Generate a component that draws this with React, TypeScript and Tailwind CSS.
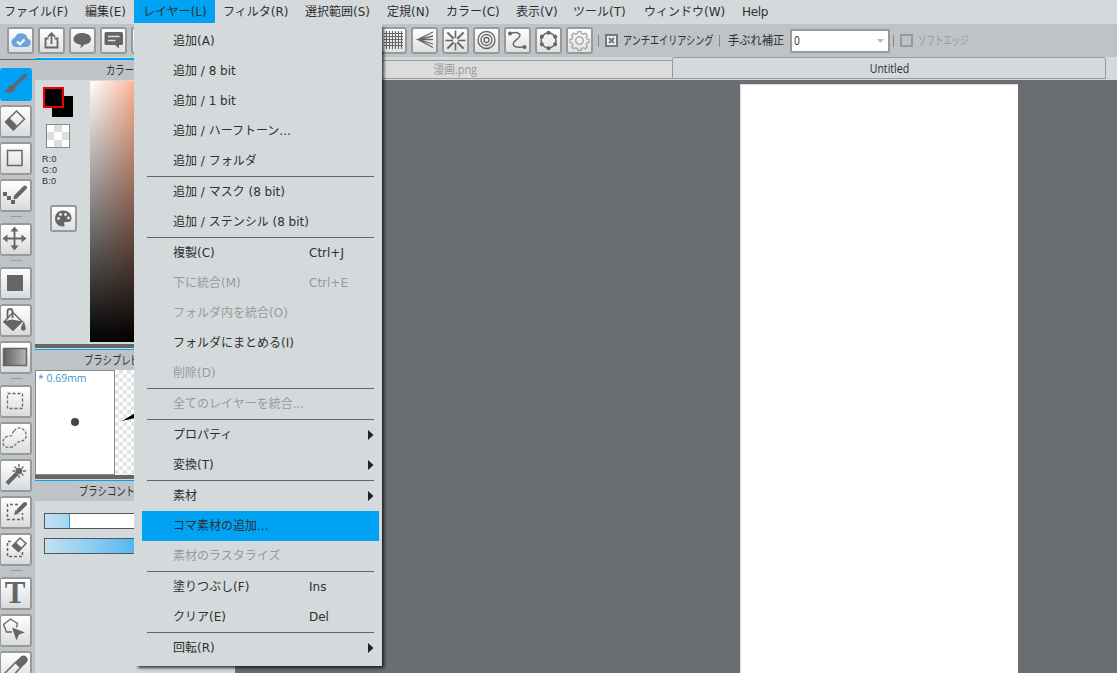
import type { ReactNode } from 'react'
import clsx from 'clsx'

const menus = [
  { label: 'ファイル(F)', cls: 'w-[81px]' },
  { label: '編集(E)', cls: 'w-[49px]' },
  { label: 'レイヤー(L)', cls: 'w-[81px] pl-[9px] bg-[#00a2f4] mr-2' },
  { label: 'フィルタ(R)', cls: 'w-[82px]' },
  { label: '選択範囲(S)', cls: 'w-[82px]' },
  { label: '定規(N)', cls: 'w-[59px]' },
  { label: 'カラー(C)', cls: 'w-[70px]' },
  { label: '表示(V)', cls: 'w-[57px]' },
  { label: 'ツール(T)', cls: 'w-[71px]' },
  { label: 'ウィンドウ(W)', cls: 'w-[98px]' },
  { label: 'Help', cls: 'tracking-[-0.3px]' },
]

type Entry = { label: string; key?: string; off?: boolean; active?: boolean; sub?: boolean }

const layerMenu: Entry[][] = [
  [
    { label: '追加(A)' },
    { label: '追加 / 8 bit' },
    { label: '追加 / 1 bit' },
    { label: '追加 / ハーフトーン...' },
    { label: '追加 / フォルダ' },
  ],
  [{ label: '追加 / マスク (8 bit)' }, { label: '追加 / ステンシル (8 bit)' }],
  [
    { label: '複製(C)', key: 'Ctrl+J' },
    { label: '下に統合(M)', key: 'Ctrl+E', off: true },
    { label: 'フォルダ内を統合(O)', off: true },
    { label: 'フォルダにまとめる(I)' },
    { label: '削除(D)', off: true },
  ],
  [{ label: '全てのレイヤーを統合...', off: true }],
  [{ label: 'プロパティ', sub: true }, { label: '変換(T)', sub: true }],
  [
    { label: '素材', sub: true },
    { label: 'コマ素材の追加...', active: true },
    { label: '素材のラスタライズ', off: true },
  ],
  [{ label: '塗りつぶし(F)', key: 'Ins' }, { label: 'クリア(E)', key: 'Del' }],
  [{ label: '回転(R)', sub: true }],
]

function Icon({ children, size = 27 }: { children?: ReactNode; size?: number }) {
  return (
    <svg width={size} height={size} viewBox={`0 0 ${size} ${size}`} fill="none" stroke="#666" strokeWidth="1.5" className="block">
      {children}
    </svg>
  )
}

function BarButton({ children }: { children?: ReactNode }) {
  return (
    <div className="size-[27px] shrink-0 rounded-[3px] border-2 border-[#999] bg-linear-to-b from-white to-[#dde0e2]">
      <div className="-m-0.5">
        <Icon>{children}</Icon>
      </div>
    </div>
  )
}

const cloud = (
  <>
    <path d="M8.5 19h10.500a3.400 3.400 0 0 0 .6-6.800 5.500 5.500 0 0 0-10.800-.7A3.800 3.800 0 0 0 8.500 19z" fill="#6ea3dc" stroke="#6ea3dc" strokeWidth="2" />
    <path d="M10 14.5l3 2.700 4.500-4.700" stroke="#fff" strokeWidth="2.200" />
  </>
)
const share = (
  <>
    <path d="M10.500 11.500H7.500v9h12v-9h-3" strokeWidth="1.800" />
    <path d="M13.500 17V7M10 9.800l3.500-3.600L17 9.800" strokeWidth="1.800" />
  </>
)
const bubble = (
  <>
    <defs>
      <pattern id="dots" width="2" height="2" patternUnits="userSpaceOnUse">
        <rect width="2" height="2" fill="#777" />
        <rect width="1" height="1" fill="#aaa" />
      </pattern>
    </defs>
    <path d="M13 6c5 0 9 2.300 9 6s-4 5.500-7 5.700c-.8 1.600-2.200 2.800-4 3 .8-1 1-2 .8-3C8 17.300 4.500 15.300 4.500 12S8 6 13 6z" fill="url(#dots)" stroke="none" />
  </>
)
const comment = (
  <>
    <path d="M6 5h15.500q1.500 0 1.500 1.500v10q0 1.500-1.500 1.500H19v3.500L15 18H6q-1.500 0-1.500-1.500v-10Q4.500 5 6 5z" fill="#666" stroke="none" />
    <path d="M8 9.500h11.500M8 13.500h7.500" stroke="#ddd" />
  </>
)

const rays = [0, 45, 90, 135, 180, 225, 270, 315]

const rulers = [
  <path key="grid" d="M6.500 4v18M9.500 4v18M12.500 4v18M15.500 4v18M18.500 4v18M21.500 4v18M4 6.500h19M4 9.500h19M4 12.500h19M4 15.500h19M4 18.500h19" strokeWidth="1.100" />,
  <path key="vanish" d="M22 5L7 12.500 22 20.500M22 9L7 12.500 22 17M22 12.500H7" strokeWidth="1.300" />,
  <g key="radial">
    {rays.map(a => (
      <path
        key={a}
        d={a % 90 ? 'M13.500 11v-9' : 'M13.500 11v-7.500'}
        strokeWidth={a % 90 ? 2 : 1.6}
        transform={`rotate(${a} 13.500 13.500)`}
      />
    ))}
  </g>,
  <g key="circle" strokeWidth="1.300">
    <circle cx="13.500" cy="13" r="8.500" />
    <circle cx="13.500" cy="13" r="5.500" />
    <circle cx="13.500" cy="13" r="2.500" />
  </g>,
  <g key="curve">
    <path d="M6.500 6.500C12 4.500 17.500 6 15.500 9.500S8 14.500 9.500 18s6 2 11 2" />
    <circle cx="6" cy="6.500" r="2" fill="#666" stroke="none" />
    <circle cx="20.500" cy="20" r="2" fill="#666" stroke="none" />
  </g>,
  <g key="ellipse">
    <circle cx="13.500" cy="13.500" r="7.500" />
    {[0, 60, 120, 180, 240, 300].map(a => (
      <circle key={a} cx="13.500" cy="5.800" r="2" fill="#666" stroke="none" transform={`rotate(${a} 13.500 13.500)`} />
    ))}
  </g>,
  <g key="gear" stroke="#aaa">
    <circle cx="13.500" cy="13.500" r="3.800" />
    <path
      d="M12 4.500h3l.5 2 1.800.8 1.900-1.100 2.100 2.100-1.100 1.900.8 1.800 2 .5v3l-2 .5-.8 1.800 1.100 1.900-2.100 2.100-1.900-1.100-1.800.8-.5 2h-3l-.5-2-1.800-.8-1.900 1.100-2.100-2.100 1.100-1.900-.8-1.800-2-.5v-3l2-.5.8-1.800-1.100-1.900 2.100-2.100 1.900 1.100 1.800-.8z"
      strokeWidth="1.400"
    />
  </g>,
]

const tools: ({ id: string; icon: ReactNode } | null)[] = [
  {
    id: 'brush',
    icon: (
      <>
        <path d="M25.500 7L14.500 17.500" strokeWidth="3.500" strokeLinecap="round" />
        <path d="M13.500 17.500c2.500 1.500 2 4.500 0 6-2.500 1.800-6.500 1.700-9.500-.5 3 0 3-1.500 4-3.500s3.500-3 5.500-2z" fill="#666" stroke="none" />
      </>
    ),
  },
  {
    id: 'eraser',
    icon: (
      <>
        <path d="M5.500 17L16.500 6l8 8-11 11z" />
        <path d="M5 17l4-4.500 8 8-4 5z" fill="#666" stroke="none" />
      </>
    ),
  },
  { id: 'shape', icon: <rect x="7.500" y="8.500" width="14.500" height="15" /> },
  {
    id: 'dot',
    icon: (
      <>
        <path d="M25 8.500L16.500 17" strokeWidth="4" strokeLinecap="round" />
        <path d="M14 16l3.500 3.500-4 1z" fill="#666" stroke="none" />
        <path d="M3 13h4v4H3zM7 17h4v4H7zM11 21h4v4h-4z" fill="#666" stroke="none" />
      </>
    ),
  },
  null,
  {
    id: 'move',
    icon: (
      <>
        <path d="M14.500 6v19M5 15.500h19" strokeWidth="1.900" />
        <path d="M14.500 3.500l4 5h-8zM14.500 27.500l4-5h-8zM2.500 15.500l5-4v8zM26.500 15.500l-5-4v8z" fill="#666" stroke="none" />
      </>
    ),
  },
  null,
  { id: 'fillrect', icon: <rect x="7" y="8" width="16" height="16" fill="#666" stroke="none" /> },
  {
    id: 'bucket',
    icon: (
      <>
        <path d="M4 18L13 8.500l9 9L13 26z" />
        <path d="M7.500 14V7.500Q7.500 5 10 5t2.500 2.500V14" strokeWidth="1.800" />
        <path d="M3 17.500l9-2 10.500 2L13 27z" fill="#666" stroke="none" />
        <path d="M24 16.500c0 3 2.500 7 1.500 9s-5 1.500-4.500-1.500 2-4 3-7.500z" fill="#666" stroke="none" />
      </>
    ),
  },
  {
    id: 'gradient',
    icon: (
      <>
        <defs>
          <linearGradient id="grad">
            <stop stopColor="#606060" />
            <stop offset="1" stopColor="#b8b8b8" />
          </linearGradient>
        </defs>
        <rect x="3.500" y="7.500" width="23" height="17" fill="url(#grad)" />
      </>
    ),
  },
  null,
  { id: 'select', icon: <rect x="7.500" y="8.500" width="15" height="15" strokeDasharray="3 2" strokeWidth="1.300" /> },
  {
    id: 'lasso',
    icon: (
      <path
        d="M14 9C17 5 21 5 24 8s3 8 0 10-6 1-8 4-6 4-10 3-4-8 0-10 5 0 6-2 0-2 2-4z"
        strokeDasharray="3 1.500"
        strokeWidth="1.200"
      />
    ),
  },
  {
    id: 'wand',
    icon: (
      <>
        <path d="M7 24.500l10-10" strokeWidth="4" />
        <circle cx="19" cy="12" r="3.300" fill="#666" stroke="none" />
        <path d="M19 5v3M19 16v3M12.500 12h3M23 12h3M14.500 7.500l2 2M23.500 7.500l-2 2M23.500 16.500l-2-2" strokeWidth="1.300" />
      </>
    ),
  },
  {
    id: 'selpen',
    icon: (
      <>
        <path d="M18 8.500H7.500v15h15V17" strokeDasharray="3 2" />
        <path d="M25 8L18.500 14.500" strokeWidth="4" strokeLinecap="round" />
        <path d="M15.500 14l3.500 3.500-5 1.500z" fill="#666" stroke="none" />
      </>
    ),
  },
  {
    id: 'seleraser',
    icon: (
      <>
        <path d="M11 8.500H7.500v15h15V19" strokeDasharray="3 2" />
        <path d="M12.500 13L20 5l6 5.500-7.500 8z" />
        <path d="M12 13l3.500-4 6.500 6-3.500 4z" fill="#666" stroke="none" />
      </>
    ),
  },
  null,
  { id: 'text', icon: null },
  {
    id: 'operate',
    icon: (
      <>
        <path d="M12 18H6.500l-3-7.500 7-5.500 7 4.500-1 4" strokeWidth="1.300" />
        <path d="M12 13.500l13 5-6 2-2.500 6z" fill="#666" stroke="none" />
      </>
    ),
  },
  {
    id: 'eyedrop',
    icon: (
      <>
        <path d="M15.500 11.500l6-5.500q2.500-1.500 4.500.5t0 4.500l-5.500 5.500z" fill="#666" />
        <path d="M15.500 11.500L4 23v6h5L20.500 16.500" />
      </>
    ),
  },
]

function ToolColumn() {
  return (
    <div className="flex h-full w-[35px] shrink-0 flex-col gap-1 border-t border-[#666] bg-[#bdc3c7] pt-2">
      {tools.map((t, i) =>
        t === null ? (
          <div key={i} className="flex h-[3px] shrink-0 pl-[11px]">
            <div className="h-px w-[11px] bg-[#999]" />
          </div>
        ) : (
          <div
            key={t.id}
            className={clsx(
              'h-[33px] w-8 shrink-0 rounded-[3px]',
              t.id === 'brush' ? 'bg-[#00a2f4]' : 'border-2 border-l-[1px] border-[#999] bg-linear-to-b from-white to-[#d8dbdd]',
            )}
          >
            {t.id === 'text' ? (
              <div className="pr-px text-center font-['Liberation_Serif',serif] text-[31px] leading-[27px] font-bold text-[#666]">T</div>
            ) : (
              <div className={t.id === 'brush' ? '' : '-mt-0.5 -ml-px'}>
                <Icon size={32}>{t.icon}</Icon>
              </div>
            )}
          </div>
        ),
      )}
    </div>
  )
}

function PanelTitle({ title, cls }: { title: string; cls: string }) {
  return (
    <div className={clsx('shrink-0 border-[#00a2f4] bg-[#bdc3c7] text-xs leading-[21px] whitespace-nowrap', cls)}>
      <span className="inline-block origin-left scale-x-[0.78]">{title}</span>
    </div>
  )
}

function SidePanel() {
  return (
    <div className="flex w-[200px] shrink-0 flex-col bg-[#d4d9db]">
      <PanelTitle title="カラー" cls="h-[22px] border-t-2 mt-px pl-[71px]" />
      <div className="flex h-[264px] shrink-0 pt-px">
        <div className="w-[55px] pt-[5px]">
          <div className="ml-[7px] flex size-[31px] items-end justify-end">
            <div className="relative size-[21px] bg-black">
              <div className="absolute -top-[9px] -left-[9px] size-[21px] border-2 border-[#f00000] bg-black" />
            </div>
          </div>
          <div className="mt-[7px] ml-[11px] grid size-6 grid-cols-3 border border-[#888]">
            {[0, 1, 2, 3, 4, 5, 6, 7, 8].map(i => (
              <div key={i} className={i % 2 ? 'bg-[#ddd]' : 'bg-white'} />
            ))}
          </div>
          <div className="mt-[6px] ml-[7px] font-['Liberation_Sans',sans-serif] text-[9px] leading-[11px] tracking-[0.2px]">
            <div>R:0</div>
            <div>G:0</div>
            <div>B:0</div>
          </div>
          <div className="mt-[18px] ml-[15px]">
            <BarButton>
              <path d="M13 5.500c5 0 8.500 3.500 8.500 7.500 0 3-1.500 4-3.500 4h-2.500c-2 0-1.500 2-1 3 .3 1.200-.5 1.500-1.500 1.500-4.500 0-8-3.500-8-8s3.500-8 8-8z" fill="#666" stroke="none" />
              <g fill="#eee" stroke="none">
                <circle cx="8.500" cy="13.500" r="1.400" />
                <circle cx="10.500" cy="9.500" r="1.400" />
                <circle cx="15.500" cy="9.500" r="1.400" />
                <circle cx="18.500" cy="13" r="1.400" />
              </g>
            </BarButton>
          </div>
        </div>
        <div className="mb-0.5 w-[140px] bg-linear-to-r from-white to-[#ffb498] to-[44px]">
          <div className="h-full bg-linear-to-b from-transparent to-black" />
        </div>
      </div>
      <div className="mb-px h-1 shrink-0 bg-[#666]" />
      <PanelTitle title="ブラシプレビュー" cls="h-[21px] border-t pl-[49px]" />
      <div className="flex h-[105px] shrink-0">
        <div className="relative flex w-20 items-center justify-center border border-[#888] bg-white text-[#4195cf]">
          <span className="absolute top-0 left-0.5 origin-left scale-x-95 text-[11px] leading-[14px] whitespace-pre">* 0.69mm</span>
          <div className="mb-0.5 size-2 rounded-full bg-[#444]" />
        </div>
        <div className="flex-1 bg-white bg-[conic-gradient(#e3e3e3_25%,transparent_0_50%,#e3e3e3_0_75%,transparent_0)] bg-size-[8px_8px]">
          <svg width="30" height="104">
            <path d="M7 51l13-8v5z" fill="#000" />
          </svg>
        </div>
      </div>
      <div className="mb-px h-1 shrink-0 bg-[#666]" />
      <PanelTitle title="ブラシコントロール" cls="h-[21px] border-t pl-[44px]" />
      <div className="mt-3 ml-[9px] flex h-4 shrink-0 border border-[#555] bg-white">
        <div className="w-[25px] border-r border-[#2c8fe0] bg-linear-to-r from-[#c4e0f2] to-[#a5d5f0]" />
      </div>
      <div className="mt-[9px] ml-[9px] h-4 shrink-0 border border-[#555] bg-linear-to-r from-[#c4e0f2] to-[#4db8f2] to-[90px]" />
    </div>
  )
}

function LayerMenu() {
  return (
    <div className="absolute top-6 left-[134px] z-10 w-[248px] bg-[#d4d9db] pt-0.5 pb-[3px] font-['DejaVu_Sans','Noto_Sans_CJK_JP',sans-serif] text-xs shadow-[3px_3px_3px_-1px_rgba(0,0,0,0.75)]">
      {layerMenu.map((group, g) => (
        <div key={g}>
          {g > 0 && <div className="mr-2 ml-[13px] h-px bg-[#666]" />}
          {group.map(e => (
            <div
              key={e.label}
              className={clsx(
                'mr-[3px] ml-2 flex h-[30px] items-center pl-[31px] whitespace-nowrap',
                e.active && 'bg-[#00a2f4]',
                e.off && 'text-[#999]',
              )}
            >
              <span className="w-[136px]">{e.label}</span>
              <span className="w-[59px]">{e.key}</span>
              {e.sub && (
                <svg width="6" height="10">
                  <path d="M0 0l5.500 5L0 10z" fill="#222" />
                </svg>
              )}
            </div>
          ))}
        </div>
      ))}
    </div>
  )
}

export default function App() {
  return (
    <div className="relative flex h-[673px] w-[1117px] flex-col overflow-hidden bg-[#6a6e72] font-['Open_Sans','Noto_Sans_CJK_JP',sans-serif] text-xs text-[#303030]">
      <div className="flex h-6 shrink-0 bg-[#d4d9db] pl-1 font-['DejaVu_Sans','Noto_Sans_CJK_JP',sans-serif] leading-6 whitespace-nowrap">
        {menus.map(m => (
          <div key={m.label} className={clsx('h-[23px]', m.cls)}>
            {m.label}
          </div>
        ))}
      </div>

      <div className="flex h-[33px] shrink-0 items-center bg-[#bdc3c7] pl-[7px] whitespace-nowrap">
        <div className="flex w-[373px] gap-1">
          <BarButton>{cloud}</BarButton>
          <BarButton>{share}</BarButton>
          <BarButton>{bubble}</BarButton>
          <BarButton>{comment}</BarButton>
          <BarButton />
        </div>
        <div className="flex gap-1">
          {rulers.map((r, i) => (
            <BarButton key={i}>{r}</BarButton>
          ))}
        </div>
        <div className="ml-[5px] h-3 w-px bg-[#888]" />
        <div className="ml-1.5 flex size-[13px] items-center justify-center border-2 border-[#777] bg-[#eee]">
          <svg width="7" height="7" stroke="#777" strokeWidth="2">
            <path d="M1 1l5 5M6 1L1 6" />
          </svg>
        </div>
        <div className="ml-[5px] w-24">
          <span className="inline-block origin-left scale-x-[0.76]">アンチエイリアシング</span>
        </div>
        <div className="h-3 w-px bg-[#888]" />
        <div className="ml-2 w-[62px]">
          <span className="inline-block origin-left scale-x-[0.94]">手ぶれ補正</span>
        </div>
        <div className="flex h-6 w-[100px] items-center justify-between rounded-xs border-2 border-[#999] bg-white pr-1 pl-0.5">
          <span className="inline-block origin-left scale-x-[0.85]">0</span>
          <svg width="7" height="4">
            <path d="M0 0h7L3.500 4z" fill="#bbb" />
          </svg>
        </div>
        <div className="ml-[3px] h-3 w-px bg-[#888]" />
        <div className="ml-1.5 size-[13px] border-2 border-[#999]" />
        <span className="ml-[5px] inline-block origin-left scale-x-[0.7] text-[#999]">ソフトエッジ</span>
      </div>

      <div className="flex min-h-0 flex-1">
        <div className="flex bg-[#bdc3c7]">
          <div className="flex pt-0.5">
            <ToolColumn />
          </div>
          <SidePanel />
        </div>
        <div className="flex min-w-0 flex-1 flex-col">
          <div className="flex h-[23px] shrink-0 items-end bg-[#d4d9db] pb-px pl-1">
            <div className="h-[19px] w-[433px] border-y border-[#999] bg-[#dcdcdc] text-center text-[#999]">
              <span className="inline-block scale-x-90 leading-[18px]">漫画.png</span>
            </div>
            <div className="h-[22px] w-[434px] rounded-t-xs border border-[#999] text-center leading-[21px]">
              <span className="inline-block scale-x-[0.88]">Untitled</span>
            </div>
          </div>
          <div className="flex flex-1 pt-1 pl-[505px]">
            <div className="w-[278px] border-t border-l border-[#ddd] bg-white" />
          </div>
        </div>
      </div>

      <LayerMenu />
    </div>
  )
}
